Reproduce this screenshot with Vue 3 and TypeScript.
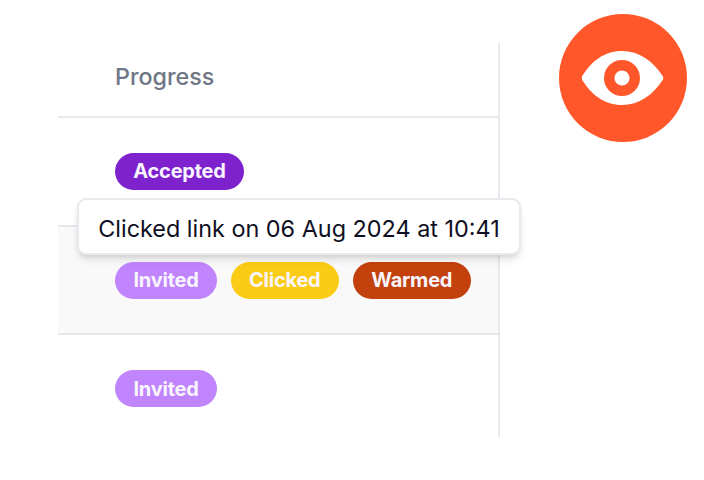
<script setup lang="ts">
interface Badge {
  label: string
  tone: string
}
interface Row {
  id: number
  highlighted: boolean
  badges: Badge[]
}

const rows: Row[] = [
  { id: 1, highlighted: false, badges: [{ label: 'Accepted', tone: 'accepted' }] },
  {
    id: 2,
    highlighted: true,
    badges: [
      { label: 'Invited', tone: 'invited' },
      { label: 'Clicked', tone: 'clicked' },
      { label: 'Warmed', tone: 'warmed' },
    ],
  },
  { id: 3, highlighted: false, badges: [{ label: 'Invited', tone: 'invited' }] },
]
</script>

<template>
  <main class="page">
    <section class="table">
      <header class="head"><span>Progress</span></header>
      <div v-for="row in rows" :key="row.id" class="row" :class="{ highlighted: row.highlighted }">
        <div v-if="row.highlighted" class="tooltip"><span>Clicked link on 06 Aug 2024 at 10:41</span></div>
        <span v-for="badge in row.badges" :key="badge.label" class="badge" :class="badge.tone">
          <span>{{ badge.label }}</span>
        </span>
      </div>
    </section>
    <svg class="eye" viewBox="0 0 128 128" aria-hidden="true">
      <circle cx="64" cy="64" r="64" fill="#ff5729" />
      <path d="M23 62.5C32 47 46 37 63 37S94 47 104 62.5Q104.7 64 104 65.5C94 81 80 91 63 91S32 81 23 65.5Q22.7 64 23 62.5Z" fill="#fff" />
      <circle cx="63" cy="64" r="18" fill="#ff5729" />
      <circle cx="63" cy="64" r="7.6" fill="#fff" />
    </svg>
  </main>
</template>

<style>
body {
  background: #fff;
}
</style>

<style scoped>
.page {
  box-sizing: border-box;
  width: 704px;
  height: 480px;
  display: flex;
  align-items: flex-start;
  gap: 59px;
  padding: 14px 0 0 58px;
  overflow: hidden;
  font-family: Inter, sans-serif;
}
.table {
  box-sizing: border-box;
  width: 442px;
  height: 394px;
  margin-top: 29px;
  border-right: 2px solid #e9e9ed;
  display: flex;
  flex-direction: column;
}
.head {
  box-sizing: border-box;
  flex: none;
  height: 75px;
  padding: 0 0 7px 57px;
  display: flex;
  align-items: center;
  border-bottom: 2px solid #e9e9eb;
  color: #6f7684;
  font-size: 23.3px;
  font-weight: 500;
}
.row {
  box-sizing: border-box;
  flex: none;
  position: relative;
  height: 108.5px;
  padding-left: 57px;
  display: flex;
  align-items: center;
  gap: 13.5px;
  border-bottom: 2px solid #e7e8ec;
}
.row:last-child {
  border-bottom: 0;
  height: 107px;
  margin-bottom: -5px;
}
.highlighted {
  padding-top: 1px;
  background: #f9f9f9;
}
.badge {
  box-sizing: border-box;
  height: 37px;
  border-radius: 19px;
  display: flex;
  align-items: center;
  justify-content: center;
  color: #f8f5ff;
  font-size: 20px;
  font-weight: 700;
  letter-spacing: -0.22px;
  white-space: nowrap;
}
.accepted {
  width: 129px;
  background: #7e22ce;
}
.invited {
  width: 102px;
  background: #c084fc;
}
.clicked {
  width: 108.5px;
  background: #facc15;
}
.warmed {
  width: 118.5px;
  background: #c2410c;
}
.tooltip {
  box-sizing: border-box;
  position: absolute;
  z-index: 1;
  left: 19px;
  top: -28.5px;
  width: 444px;
  height: 57px;
  display: flex;
  align-items: center;
  justify-content: center;
  border: 2px solid #e8e9ee;
  border-radius: 9px;
  background: #fff;
  box-shadow: 0 6px 9px -2px rgba(0, 0, 0, 0.12), 0 3px 6px -3px rgba(0, 0, 0, 0.12);
  color: #0f0f23;
  font-size: 23.4px;
  white-space: nowrap;
}
.tooltip span {
  padding-top: 3px;
}
.eye {
  width: 128px;
  height: 128px;
  flex: none;
}
</style>
